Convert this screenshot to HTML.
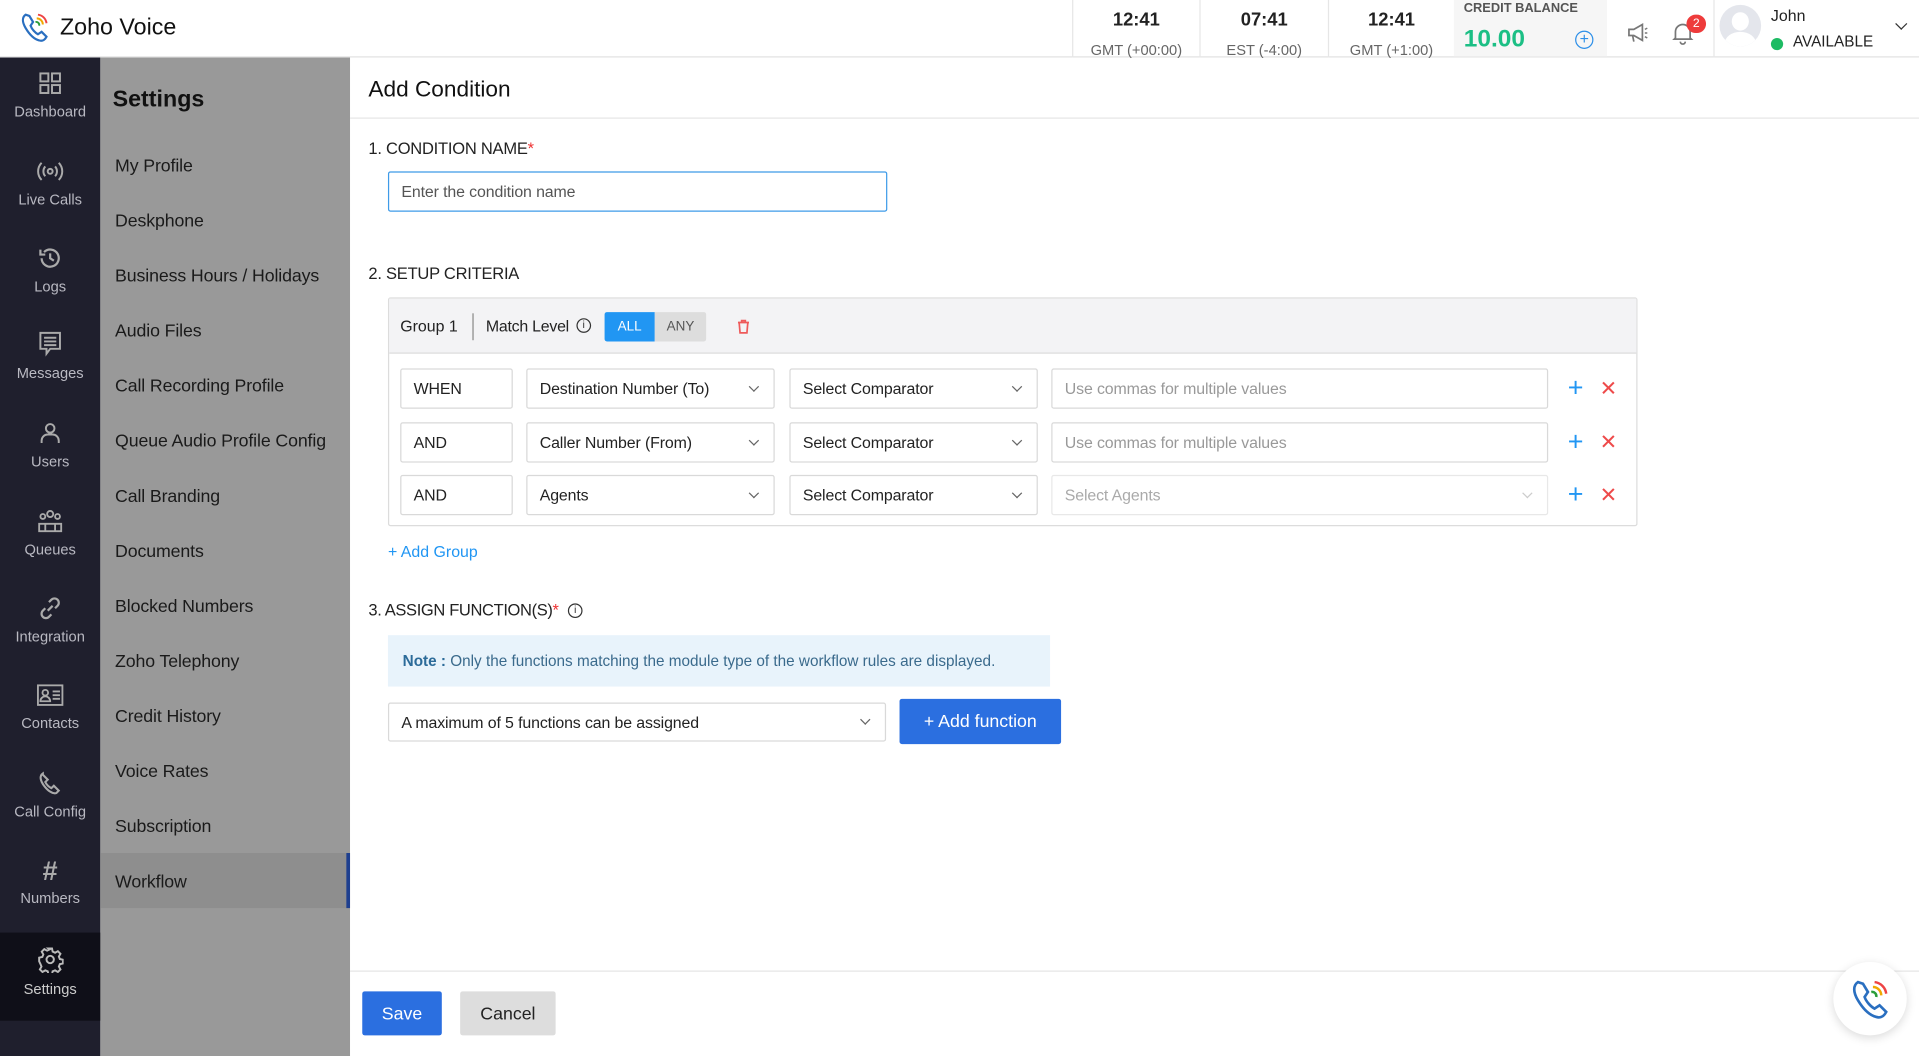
<!DOCTYPE html>
<html><head><meta charset="utf-8"><style>
*{box-sizing:border-box;margin:0;padding:0}
html,body{width:1919px;height:1056px;overflow:hidden;background:#fff;font-family:"Liberation Sans",sans-serif}
#w{position:absolute;left:0;top:0;width:1568px;height:863px;transform:scale(1.22385);transform-origin:0 0;color:#222}
.a{position:absolute}
.t{position:absolute;white-space:nowrap}
.rl{position:absolute;left:0;width:82px;text-align:center;font-size:12px;color:#b9b9c2}
.rl svg{display:block;margin:0 auto 6px}
.si{position:absolute;left:94px;font-size:14.5px;color:#1a1a1a;letter-spacing:-0.1px}
.box{position:absolute;border:1px solid #d9d9d9;border-radius:2px;background:#fff;font-size:13px;color:#222;padding:0 10px;display:flex;align-items:center;letter-spacing:-0.1px}
.ph{color:#999}
.chev{position:absolute;right:13px;top:11px;width:6px;height:6px;border-right:1.2px solid #666;border-bottom:1.2px solid #666;transform:rotate(45deg)}
.plus{position:absolute;color:#2196f3;font-size:22px;font-weight:300;line-height:1}
.x{position:absolute;color:#ee4a4a;font-size:17px;line-height:1}
</style></head><body><div id="w">
<div class="a" style="left:0;top:0;width:1568px;height:47px;border-bottom:1px solid #e2e2e2;background:#fff"></div>
<svg class="a" style="left:16px;top:8px" width="26" height="28" viewBox="0 0 26 28"><path d="M5 4c-3 2-3 6 0 11 3 5 7 9 11 10 3 1 5-1 6-3l-4-4-3 2c-2-1-5-4-6-7l2-3-3-5z" fill="none" stroke="#2a6fc0" stroke-width="1.8"/><path d="M15 4a8 8 0 0 1 7 7" fill="none" stroke="#e44" stroke-width="1.6"/><path d="M14 7a5 5 0 0 1 5 5" fill="none" stroke="#f0a800" stroke-width="1.6"/><path d="M13 10a2.5 2.5 0 0 1 3 3" fill="none" stroke="#2a9d3a" stroke-width="1.6"/></svg>
<div class="t" style="left:49px;top:12px;font-size:19px;color:#111">Zoho Voice</div>
<div class="a" style="left:876px;top:0;width:1px;height:47px;background:#e6e6e6"></div>
<div class="a" style="left:980px;top:0;width:1px;height:47px;background:#e6e6e6"></div>
<div class="a" style="left:1085px;top:0;width:1px;height:47px;background:#e6e6e6"></div>
<div class="a" style="left:1188px;top:0;width:125px;height:46px;background:#f6f6f6"></div>
<div class="a" style="left:1400px;top:0;width:1px;height:47px;background:#e6e6e6"></div>
<div class="t" style="left:877px;width:103px;text-align:center;top:8px;font-size:15px;font-weight:bold">12:41</div>
<div class="t" style="left:877px;width:103px;text-align:center;top:34px;font-size:12px;color:#666">GMT (+00:00)</div>
<div class="t" style="left:981px;width:104px;text-align:center;top:8px;font-size:15px;font-weight:bold">07:41</div>
<div class="t" style="left:981px;width:104px;text-align:center;top:34px;font-size:12px;color:#666">EST (-4:00)</div>
<div class="t" style="left:1086px;width:102px;text-align:center;top:8px;font-size:15px;font-weight:bold">12:41</div>
<div class="t" style="left:1086px;width:102px;text-align:center;top:34px;font-size:12px;color:#666">GMT (+1:00)</div>
<div class="t" style="left:1196px;top:1px;font-size:10.5px;font-weight:bold;color:#555">CREDIT BALANCE</div>
<div class="t" style="left:1196px;top:21px;font-size:20px;font-weight:bold;color:#1cbf85">10.00</div>
<div class="a" style="left:1287px;top:25px;width:15px;height:15px;border:1.5px solid #2d8fe8;border-radius:50%;color:#2d8fe8;font-size:13px;line-height:11px;text-align:center">+</div>
<svg class="a" style="left:1329px;top:18px" width="20" height="18" viewBox="0 0 20 18"><path d="M2 6h4l7-4v13l-7-4H2z M5 11l1 5" fill="none" stroke="#777" stroke-width="1.4"/><path d="M15 6l2-1M15 9h2M15 12l2 1" stroke="#777" stroke-width="1.2"/></svg>
<svg class="a" style="left:1366px;top:17px" width="18" height="20" viewBox="0 0 18 20"><path d="M3 14V9a6 6 0 0 1 12 0v5l1 1H2z M7 17a2 2 0 0 0 4 0" fill="none" stroke="#777" stroke-width="1.4"/></svg>
<div class="a" style="left:1378px;top:12px;width:16px;height:15px;background:#ee3b3b;border-radius:8px;color:#fff;font-size:10px;text-align:center;line-height:15px">2</div>
<div class="a" style="left:1405px;top:4px;width:34px;height:34px;border-radius:50%;background:#e4e6ec;overflow:hidden"><div class="a" style="left:10px;top:6px;width:14px;height:15px;border-radius:50%;background:#fff"></div><div class="a" style="left:4px;top:22px;width:26px;height:20px;border-radius:50%;background:#fff"></div></div>
<div class="t" style="left:1447px;top:5px;font-size:13px">John</div>
<div class="a" style="left:1447px;top:31px;width:10px;height:10px;border-radius:50%;background:#1dbb63"></div>
<div class="t" style="left:1465px;top:27px;font-size:12.5px">AVAILABLE</div>
<div class="a" style="left:1550px;top:16px;width:7px;height:7px;border-right:1.5px solid #333;border-bottom:1.5px solid #333;transform:rotate(45deg)"></div>

<div class="a" style="left:0;top:47px;width:82px;height:816px;background:#1f1f2d"></div>
<div class="a" style="left:0;top:762px;width:82px;height:72px;background:#0f0f18"></div>
<div class="rl" style="top:58px"><svg width="20" height="20" viewBox="0 0 20 20" fill="none" stroke="#aaa" stroke-width="1.6"><rect x="2" y="2" width="6.5" height="6.5"/><rect x="11.5" y="2" width="6.5" height="6.5"/><rect x="2" y="11.5" width="6.5" height="6.5"/><rect x="11.5" y="11.5" width="6.5" height="6.5"/></svg>Dashboard</div>
<div class="rl" style="top:130px"><svg width="22" height="20" viewBox="0 0 22 20" fill="none" stroke="#aaa" stroke-width="1.6"><circle cx="11" cy="10" r="2"/><path d="M7 6a6 6 0 0 0 0 8M15 6a6 6 0 0 1 0 8M4 3a10 10 0 0 0 0 14M18 3a10 10 0 0 1 0 14"/></svg>Live Calls</div>
<div class="rl" style="top:201px"><svg width="20" height="20" viewBox="0 0 20 20" fill="none" stroke="#aaa" stroke-width="1.8"><path d="M3 10a7 7 0 1 0 2-5M2 3v4h4M10 6v4l3 2"/></svg>Logs</div>
<div class="rl" style="top:270px"><svg width="20" height="22" viewBox="0 0 20 22" fill="none" stroke="#aaa" stroke-width="1.6"><path d="M2 2h16v13h-8l-3 4v-4H2z M5 6h10M5 9h10M5 12h10"/></svg>Messages</div>
<div class="rl" style="top:344px"><svg width="20" height="20" viewBox="0 0 20 20" fill="none" stroke="#aaa" stroke-width="1.6"><circle cx="10" cy="6" r="3.5"/><path d="M3 18v-2a5 5 0 0 1 5-5h4a5 5 0 0 1 5 5v2"/></svg>Users</div>
<div class="rl" style="top:416px"><svg width="22" height="20" viewBox="0 0 22 20" fill="none" stroke="#aaa" stroke-width="1.5"><circle cx="11" cy="4" r="2.5"/><circle cx="5" cy="6" r="2"/><circle cx="17" cy="6" r="2"/><path d="M2 18v-6h18v6zM7 12v6M15 12v6"/></svg>Queues</div>
<div class="rl" style="top:487px"><svg width="20" height="20" viewBox="0 0 20 20" fill="none" stroke="#aaa" stroke-width="1.8"><path d="M8 12l4-4M9 5l2-2a3.5 3.5 0 0 1 5 5l-2 2M11 15l-2 2a3.5 3.5 0 0 1-5-5l2-2"/></svg>Integration</div>
<div class="rl" style="top:558px"><svg width="22" height="20" viewBox="0 0 22 20" fill="none" stroke="#aaa" stroke-width="1.5"><rect x="1" y="2" width="20" height="16"/><circle cx="7" cy="8" r="2.3"/><path d="M3 15a4 4 0 0 1 8 0zM13 7h6M13 10h6M13 13h6"/></svg>Contacts</div>
<div class="rl" style="top:630px"><svg width="20" height="20" viewBox="0 0 20 20" fill="none" stroke="#aaa" stroke-width="1.7"><path d="M4 2c-3 2-2 6 1 10s7 7 10 6l2-2-4-4-2 2c-2-1-4-3-5-5l2-2-4-4z"/></svg>Call Config</div>
<div class="rl" style="top:701px;"><div style="font-size:22px;color:#aaa;font-weight:bold;line-height:22px;margin-bottom:4px">#</div>Numbers</div>
<div class="rl" style="top:773px;color:#ccc"><svg width="22" height="22" viewBox="0 0 22 22" fill="none" stroke="#bbb" stroke-width="1.6"><circle cx="11" cy="11" r="3"/><path d="M9.5 2h3l.5 2.5 2 1 2.3-1.3 2.1 2.1-1.3 2.3.8 2 2.6.6v3l-2.6.6-.8 2 1.3 2.3-2.1 2.1-2.3-1.3-2 .8-.5 2.6h-3l-.5-2.6-2-.8-2.3 1.3-2.1-2.1 1.3-2.3-.8-2L2 12.5v-3l2.6-.6.8-2-1.3-2.3 2.1-2.1 2.3 1.3 2-1z"/></svg>Settings</div>

<div class="a" style="left:82px;top:47px;width:204px;height:816px;background:#999"></div>
<div class="a" style="left:82px;top:697px;width:204px;height:45px;background:#8e8e8e;border-right:3px solid #1e3f8f"></div>
<div class="t" style="left:92px;top:71px;font-size:19px;font-weight:bold;color:#111">Settings</div>
<div class="si" style="top:128px">My Profile</div>
<div class="si" style="top:173px">Deskphone</div>
<div class="si" style="top:218px">Business Hours / Holidays</div>
<div class="si" style="top:263px">Audio Files</div>
<div class="si" style="top:308px">Call Recording Profile</div>
<div class="si" style="top:353px">Queue Audio Profile Config</div>
<div class="si" style="top:398px">Call Branding</div>
<div class="si" style="top:443px">Documents</div>
<div class="si" style="top:488px">Blocked Numbers</div>
<div class="si" style="top:533px">Zoho Telephony</div>
<div class="si" style="top:578px">Credit History</div>
<div class="si" style="top:623px">Voice Rates</div>
<div class="si" style="top:668px">Subscription</div>
<div class="si" style="top:713px">Workflow</div>

<div class="t" style="left:301px;top:62px;font-size:18.5px;color:#111">Add Condition</div>
<div class="a" style="left:286px;top:96px;width:1282px;height:1px;background:#e6e6e6"></div>
<div class="t" style="left:301px;top:114px;font-size:13.5px;letter-spacing:-0.2px">1. CONDITION NAME<span style="color:#e33">*</span></div>
<div class="box" style="left:317px;top:140px;width:408px;height:33px;border-color:#3f9be8"><span style="color:#555">Enter the condition name</span></div>
<div class="t" style="left:301px;top:216px;font-size:13.5px;letter-spacing:-0.2px">2. SETUP CRITERIA</div>
<div class="a" style="left:317px;top:243px;width:1021px;height:187px;border:1px solid #dcdcdc;border-radius:2px"></div>
<div class="a" style="left:318px;top:244px;width:1019px;height:45px;background:#f3f3f5;border-bottom:1px solid #ddd"></div>
<div class="t" style="left:327px;top:259px;font-size:13px">Group 1</div>
<div class="a" style="left:386px;top:256px;width:1px;height:22px;background:#888"></div>
<div class="t" style="left:397px;top:259px;font-size:13px;letter-spacing:-0.2px">Match Level</div>
<div class="a" style="left:471px;top:260px;width:12px;height:12px;border:1px solid #333;border-radius:50%;font-size:8px;text-align:center;line-height:10px">i</div>
<div class="a" style="left:494px;top:255px;width:41px;height:24px;background:#2196f3;border-radius:2px 0 0 2px;color:#fff;font-size:11px;text-align:center;line-height:24px">ALL</div>
<div class="a" style="left:535px;top:255px;width:42px;height:24px;background:#ddd;border-radius:0 2px 2px 0;color:#555;font-size:11px;text-align:center;line-height:24px">ANY</div>
<svg class="a" style="left:602px;top:261px" width="11" height="12" viewBox="0 0 11 12" fill="none" stroke="#ee5a5a" stroke-width="1.4"><path d="M1 2.5h9M4 2.5V1h3v1.5M2 3l.7 8h5.6L9 3"/></svg>

<div class="box" style="left:327px;top:301px;width:92px;height:33px">WHEN</div>
<div class="box" style="left:430px;top:301px;width:203px;height:33px">Destination Number (To)<i class="chev"></i></div>
<div class="box" style="left:645px;top:301px;width:203px;height:33px">Select Comparator<i class="chev"></i></div>
<div class="box" style="left:859px;top:301px;width:406px;height:33px"><span class="ph">Use commas for multiple values</span></div>
<div class="plus" style="left:1281px;top:306px">+</div><div class="x" style="left:1307px;top:309px">✕</div>

<div class="box" style="left:327px;top:345px;width:92px;height:33px">AND</div>
<div class="box" style="left:430px;top:345px;width:203px;height:33px">Caller Number (From)<i class="chev"></i></div>
<div class="box" style="left:645px;top:345px;width:203px;height:33px">Select Comparator<i class="chev"></i></div>
<div class="box" style="left:859px;top:345px;width:406px;height:33px"><span class="ph">Use commas for multiple values</span></div>
<div class="plus" style="left:1281px;top:350px">+</div><div class="x" style="left:1307px;top:353px">✕</div>

<div class="box" style="left:327px;top:388px;width:92px;height:33px">AND</div>
<div class="box" style="left:430px;top:388px;width:203px;height:33px">Agents<i class="chev"></i></div>
<div class="box" style="left:645px;top:388px;width:203px;height:33px">Select Comparator<i class="chev"></i></div>
<div class="box" style="left:859px;top:388px;width:406px;height:33px;border-color:#e8e8e8"><span style="color:#aaa">Select Agents</span><i class="chev" style="border-color:#ccc"></i></div>
<div class="plus" style="left:1281px;top:393px">+</div><div class="x" style="left:1307px;top:396px">✕</div>

<div class="t" style="left:317px;top:443px;font-size:13px;color:#2196f3">+ Add Group</div>
<div class="t" style="left:301px;top:491px;font-size:13.5px;letter-spacing:-0.3px">3. ASSIGN FUNCTION(S)<span style="color:#e33">*</span></div>
<div class="a" style="left:464px;top:493px;width:12px;height:12px;border:1px solid #333;border-radius:50%;font-size:8px;text-align:center;line-height:10px">i</div>
<div class="a" style="left:317px;top:519px;width:541px;height:42px;background:#e8f3fb"></div>
<div class="t" style="left:329px;top:533px;font-size:12.5px;color:#3a6a8c"><b style="color:#2c6b99">Note :</b> Only the functions matching the module type of the workflow rules are displayed.</div>
<div class="box" style="left:317px;top:574px;width:407px;height:32px">A maximum of 5 functions can be assigned<i class="chev" style="top:10px"></i></div>
<div class="a" style="left:735px;top:571px;width:132px;height:37px;background:#2b6fe0;border-radius:2px;color:#fff;font-size:14.5px;text-align:center;line-height:39px">+ Add function</div>

<div class="a" style="left:286px;top:793px;width:1282px;height:1px;background:#e6e6e6"></div>
<div class="a" style="left:296px;top:810px;width:65px;height:36px;background:#2b6fe0;border-radius:2px;color:#fff;font-size:14.5px;text-align:center;line-height:38px">Save</div>
<div class="a" style="left:376px;top:810px;width:78px;height:36px;background:#ddd;border-radius:2px;color:#222;font-size:14.5px;text-align:center;line-height:38px">Cancel</div>
<div class="a" style="left:1498px;top:786px;width:60px;height:60px;border-radius:50%;background:#fff;box-shadow:0 2px 8px rgba(0,0,0,.15)"></div>
<svg class="a" style="left:1510px;top:797px" width="38" height="38" viewBox="0 0 26 28"><path d="M5 4c-3 2-3 6 0 11 3 5 7 9 11 10 3 1 5-1 6-3l-4-4-3 2c-2-1-5-4-6-7l2-3-3-5z" fill="none" stroke="#2a6fc0" stroke-width="1.6"/><path d="M15 4a8 8 0 0 1 7 7" fill="none" stroke="#e44" stroke-width="1.5"/><path d="M14 7a5 5 0 0 1 5 5" fill="none" stroke="#f0a800" stroke-width="1.5"/><path d="M13 10a2.5 2.5 0 0 1 3 3" fill="none" stroke="#2a9d3a" stroke-width="1.5"/></svg>
</div></body></html>
